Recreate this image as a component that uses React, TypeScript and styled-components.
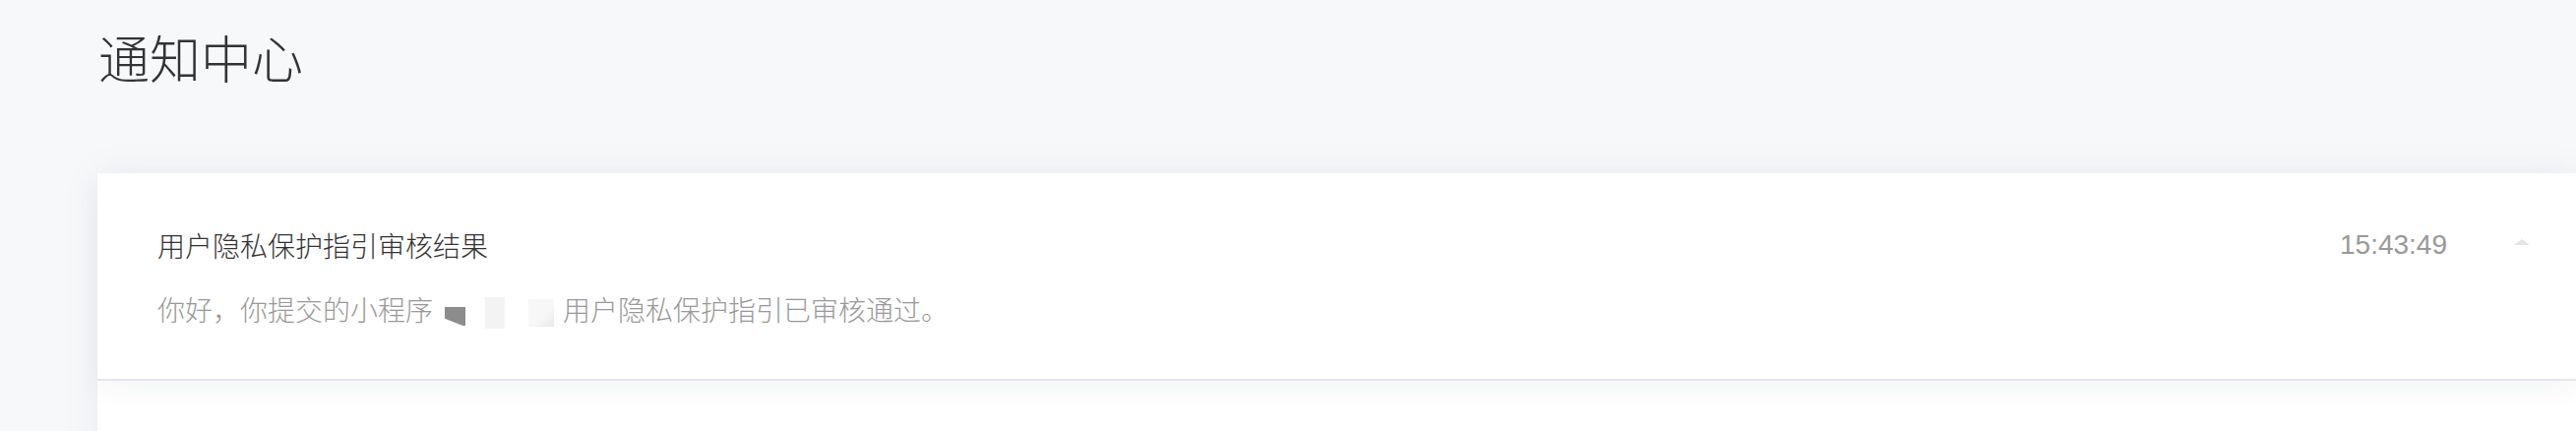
import styled, { createGlobalStyle } from "styled-components";

const GlobalStyle = createGlobalStyle`
  html, body {
    margin: 0;
    padding: 0;
    background: #f7f8fa;
  }
  body {
    font-family: "Noto Sans CJK SC", "Liberation Sans", sans-serif;
  }
`;

interface Notice {
  id: number;
  title: string;
  time: string;
  lead: string;
  tail: string;
  expanded: boolean;
}

const notices: Notice[] = [
  {
    id: 1,
    title: "用户隐私保护指引审核结果",
    time: "15:43:49",
    lead: "你好，你提交的小程序",
    tail: "用户隐私保护指引已审核通过。",
    expanded: true,
  },
];

const NoticeItem = ({ notice }: { notice: Notice }) => (
  <Item expanded={notice.expanded}>
    <Body>
      <ItemTitle>{notice.title}</ItemTitle>
      <ItemText>
        {notice.lead}
        <Mosaic tone="dark" />
        <Mosaic tone="light" />
        <Mosaic tone="faint" />
        {notice.tail}
      </ItemText>
    </Body>
    <Meta>
      <Time>{notice.time}</Time>
      <Arrow />
    </Meta>
  </Item>
);

const App = () => {
  return (
    <Page>
      <GlobalStyle />
      <Header>通知中心</Header>
      <Card>
        {notices.map((n) => (
          <NoticeItem key={n.id} notice={n} />
        ))}
      </Card>
    </Page>
  );
};

const Page = styled.div`
  height: 438px;
  background: #f7f8fa;
  overflow: hidden;
`;

const Header = styled.h1`
  margin: 0 0 83px;
  padding: 23px 0 0 100px;
  height: 70px;
  font-size: 52px;
  line-height: 70px;
  font-weight: 300;
  color: #333333;
`;

const Card = styled.div`
  margin-left: 99px;
  min-height: 320px;
  background: #ffffff;
  box-shadow: 0 0 40px rgba(20, 30, 60, 0.06);
`;

const Item = styled.div<{ expanded: boolean }>`
  position: relative;
  display: flex;
  align-items: flex-start;
  padding: 53px 47px 51px 61px;
  background: #ffffff;
  border-bottom: 2px solid #e4e5ea;
  z-index: ${({ expanded }) => (expanded ? 1 : 0)};
  box-shadow: ${({ expanded }) => (expanded ? "0 10px 24px rgba(30, 40, 70, 0.045)" : "none")};
`;

const Body = styled.div`
  flex: 1;
  min-width: 0;
`;

const ItemTitle = styled.div`
  font-size: 28px;
  line-height: 40px;
  font-weight: 300;
  color: #333333;
`;

const ItemText = styled.div`
  margin-top: 25px;
  font-size: 28px;
  line-height: 40px;
  font-weight: 300;
  color: #999999;
  white-space: nowrap;
`;

const mosaicStyles = {
  dark: "width: 21px; height: 19px; margin: 0 20px 0 12px; background: #8c8c8c; clip-path: polygon(0 0, 100% 0, 100% 100%, 88% 100%, 0 62%); transform: translateY(3px);",
  light: "width: 20px; height: 32px; margin: 0 24px 0 0; background: #f3f3f3;",
  faint: "width: 26px; height: 28px; margin: 0 9px 0 0; background: linear-gradient(135deg, #f7f7f7 60%, #e8e8e8 100%);",
} as const;

const Mosaic = styled.span<{ tone: keyof typeof mosaicStyles }>`
  display: inline-block;
  vertical-align: middle;
  ${({ tone }) => mosaicStyles[tone]}
`;

const Meta = styled.div`
  display: flex;
  align-items: flex-start;
  gap: 68px;
`;

const Time = styled.span`
  font-family: "Liberation Sans", Arial, sans-serif;
  font-size: 28px;
  line-height: 40px;
  color: #999999;
`;

const Arrow = styled.span`
  margin-top: 14px;
  width: 0;
  height: 0;
  border-left: 8px solid transparent;
  border-right: 8px solid transparent;
  border-bottom: 6px solid #e3e3e8;
`;

export default App;
